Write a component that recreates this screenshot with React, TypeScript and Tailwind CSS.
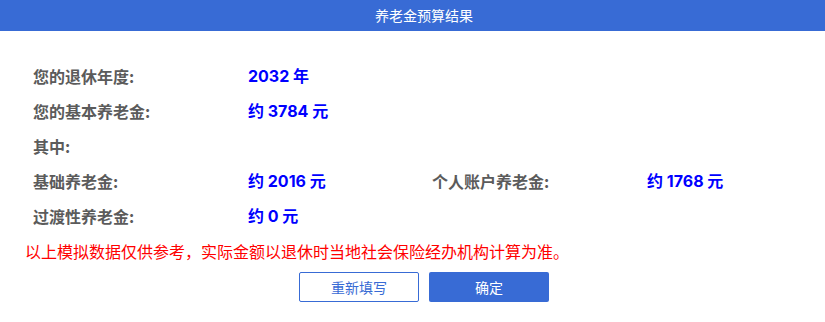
const font = {
  fontFamily: '"Noto Sans CJK SC", "Liberation Sans", sans-serif',
};

function Label({ text, w }: { text: string; w: string }) {
  return <div className={`${w} shrink-0 text-[16px] font-bold text-[#5b5b5b]`}>{text}</div>;
}

function Value({ text, w }: { text: string; w?: string }) {
  return (
    <div
      className={`${w ?? ''} shrink-0 text-[16px] font-bold text-[#0000ff]`}
      style={{ fontFamily: 'Inter, "Noto Sans CJK SC", sans-serif' }}
    >
      {text}
    </div>
  );
}

export default function App() {
  return (
    <div className="w-[825px] h-[322px] bg-white" style={font}>
      {/* header */}
      <div className="h-[31px] bg-[#386bd5] flex items-center justify-center pl-[23px] text-[14px] text-white">
        养老金预算结果
      </div>

      <div className="pt-[27px] pl-[33px]">
        <div className="h-[35px] flex items-center">
          <Label text="您的退休年度:" w="w-[215px]" />
          <Value text="2032 年" />
        </div>
        <div className="h-[35px] flex items-center">
          <Label text="您的基本养老金:" w="w-[215px]" />
          <Value text="约 3784 元" />
        </div>
        <div className="h-[35px] flex items-center">
          <Label text="其中:" w="w-[215px]" />
        </div>
        <div className="h-[35px] flex items-center">
          <Label text="基础养老金:" w="w-[215px]" />
          <Value text="约 2016 元" w="w-[184px]" />
          <Label text="个人账户养老金:" w="w-[215px]" />
          <Value text="约 1768 元" />
        </div>
        <div className="h-[35px] flex items-center">
          <Label text="过渡性养老金:" w="w-[215px]" />
          <Value text="约 0 元" />
        </div>
      </div>

      <div className="h-[35px] flex items-center pl-[25px] text-[16px] text-[#ff0000]">
        以上模拟数据仅供参考，实际金额以退休时当地社会保险经办机构计算为准。
      </div>

      <div className="mt-[4px] flex justify-center gap-[10px] pl-[23px]">
        <button className="w-[120px] h-[30px] border border-[#386bd5] rounded-[2px] bg-white text-[14px] text-[#386bd5]">
          重新填写
        </button>
        <button className="w-[120px] h-[30px] rounded-[2px] bg-[#386bd5] text-[14px] text-white">
          确定
        </button>
      </div>
    </div>
  );
}
